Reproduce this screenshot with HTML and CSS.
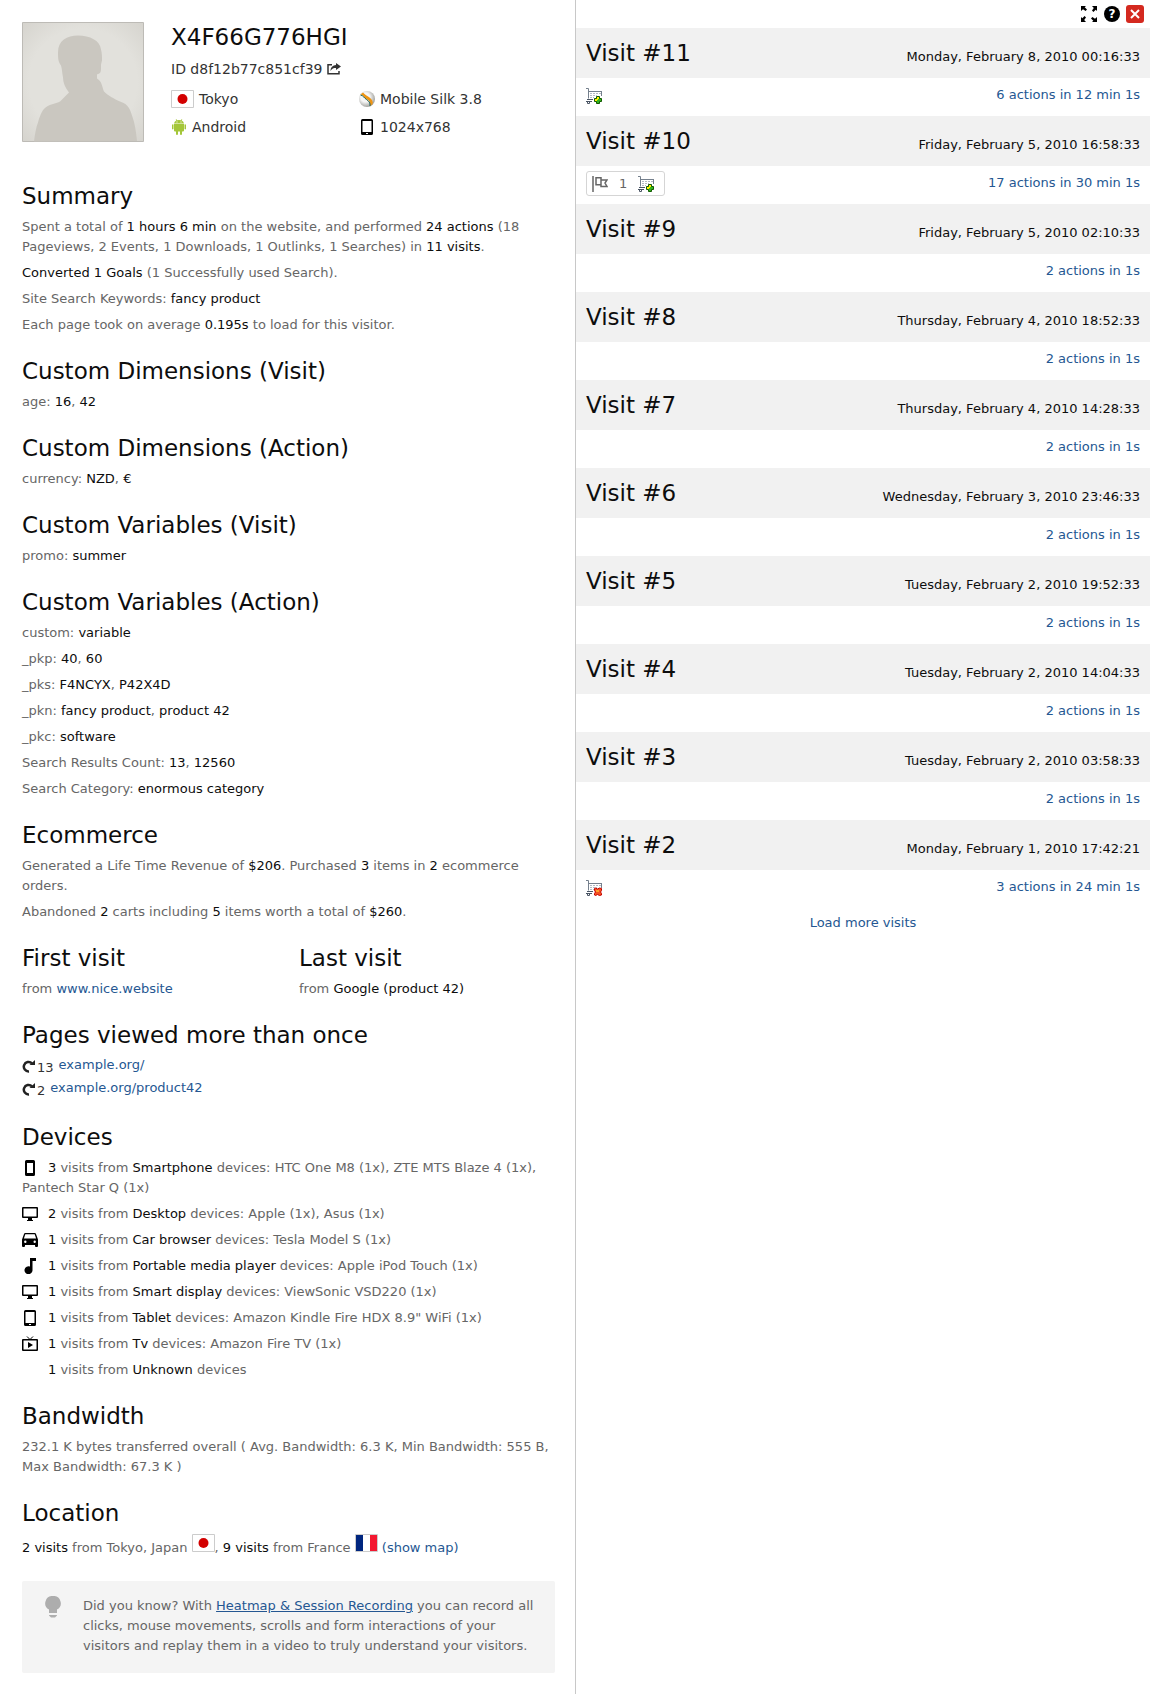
FILE: index.html
```html
<!DOCTYPE html>
<html lang="en">
<head>
<meta charset="utf-8">
<title>Visitor profile</title>
<link rel="stylesheet" href="styles.css">
</head>
<body>
<svg class="defs" aria-hidden="true">
  <symbol id="i-phone" viewBox="0 0 16 16"><path fill="#000" fill-rule="evenodd" d="M4.500 0h7A1.500 1.500 0 0 1 13 1.500v13a1.500 1.500 0 0 1-1.500 1.500h-7A1.500 1.500 0 0 1 3 14.500v-13A1.500 1.500 0 0 1 4.500 0zM5 3v10h6V3z"/></symbol>
  <symbol id="i-desktop" viewBox="0 0 16 16"><path fill="#000" fill-rule="evenodd" d="M1 1h14a1 1 0 0 1 1 1v9a1 1 0 0 1-1 1h-5v2h1v1H5v-1h1v-2H1a1 1 0 0 1-1-1V2a1 1 0 0 1 1-1zM1.500 2.500v8h13v-8z"/></symbol>
  <symbol id="i-car" viewBox="0 0 16 16"><path fill="#000" fill-rule="evenodd" d="M3.200 1h9.600q.9 0 1.200.9L16 7.500V14a1 1 0 0 1-1 1h-1a1 1 0 0 1-1-1v-1H3v1a1 1 0 0 1-1 1H1a1 1 0 0 1-1-1V7.500l2-5.600Q2.300 1 3.200 1zM3.300 2.300 1.900 6.500h12.200l-1.400-4.200zM3.300 8.500a1.200 1.200 0 1 0 0 2.400 1.200 1.200 0 0 0 0-2.400zm9.400 0a1.200 1.200 0 1 0 0 2.400 1.200 1.200 0 0 0 0-2.400z"/></symbol>
  <symbol id="i-music" viewBox="0 0 16 16"><path fill="#000" d="M8 0h6v3h-3.500v9A4 4 0 1 1 8 8.500z"/></symbol>
  <symbol id="i-tablet" viewBox="0 0 16 16"><path fill="#000" fill-rule="evenodd" d="M3.500 0h9A1.500 1.500 0 0 1 14 1.500v13a1.500 1.500 0 0 1-1.500 1.500h-9A1.500 1.500 0 0 1 2 14.500v-13A1.500 1.500 0 0 1 3.500 0zM3.500 2v11h9V2zM7 14v1h2v-1z"/></symbol>
  <symbol id="i-tv" viewBox="0 0 16 16"><path fill="#000" fill-rule="evenodd" d="M1 3h14a1 1 0 0 1 1 1v10a1 1 0 0 1-1 1H1a1 1 0 0 1-1-1V4a1 1 0 0 1 1-1zM1.500 4.500v9h13v-9zM6 6l5 3-5 3z"/><path fill="none" stroke="#000" d="M5 .5 8 3.500l3-3"/></symbol>
  <symbol id="i-japan" viewBox="0 0 23 18"><path fill="#fff" stroke="#ccc" d="M.5.5h22v17H.5z"/><circle cx="11.500" cy="9" r="5" fill="#d30000"/></symbol>
  <symbol id="i-cart" viewBox="0 0 16 16"><path fill="none" stroke="#75808d" d="M0 .5h2.500v10M3 3.500h13M15.500 4v4"/><path fill="none" stroke="#b4bac3" stroke-dasharray="2 1" d="M4 5.500h11M4 7.500h7M4 9.500h4"/><path fill="none" stroke="#4a5564" d="M1 11.500h6M0 13.500h6M1.500 14v1.500h2V14"/></symbol>
  <symbol id="i-cart-add" viewBox="0 0 16 16"><use href="#i-cart"/><path fill="#2fb51c" stroke="#125800" d="M10.500 8.500h3v2h2v3h-2v2h-3v-2h-2v-3h2z"/><path fill="#fff200" d="M11 9h2v2h-1v1h-1v1H9v-2h2z"/></symbol>
  <symbol id="i-cart-del" viewBox="0 0 16 16"><use href="#i-cart"/><path fill="#f4511e" stroke="#c40000" d="m8.500 8.500 1-.5 2 1 2-1 2 .5v2l-1 1.500 1 1.500v1.500l-2 .5-2-1-2 1-1-.5v-1.500l1-1.500-1-1.500z"/><path fill="#ff9c2a" d="M10 10h3v2h-3z"/></symbol>
  <symbol id="i-repeat" viewBox="0 0 14 16"><path fill="none" stroke="#222" stroke-width="2.500" d="M10 3.300A4.800 4.800 0 1 0 7 11.500"/><path fill="#222" d="M7.500 5H13V0z"/></symbol>
</svg>
<main class="profile">
  <section class="overview">
    <header class="visitor">
      <svg class="avatar" viewBox="0 0 122 120" role="img" aria-label="Visitor avatar">
        <defs><radialGradient id="paper" r=".75"><stop offset=".6" stop-color="#e2e1dc"/><stop offset="1" stop-color="#d3d1cb"/></radialGradient></defs>
        <path fill="url(#paper)" stroke="#bdbbb6" d="M.5.500h121v119H.5z"/>
        <path fill="#cac7c0" d="M12 119.500c1-8 2-14 4-19 2-8 5-14 9-16 5-3 9-3 13-5l9-9c-4-5-6-10-6-15-1-5-1-9-2-12-3-4-3-8-3-13 0-12 9-17 20-17 12 0 22 5 23 14 1 4 1 7 1 11l-1 4v4c0 4-1 5-4 6v4c5 3 5 8 7 13 5 5 10 7 16 10 9 3 10 8 12 14 3 8 4 16 5 25.500z"/>
      </svg>
      <div class="identity">
        <h1>X4F66G776HGI</h1>
        <p class="visitor-id">ID d8f12b77c851cf39
          <svg class="share" viewBox="0 0 14 12"><path fill="none" stroke="#333" stroke-width="1.500" d="M5 1.700H1v9h11V8"/><path fill="#333" d="M9 0l5 3.500L9 7V5C6.500 5 5 5.500 3.500 8 3.500 4.500 6 2.200 9 2z"/></svg></p>
        <div class="facts">
          <span class="fact"><svg class="flag"><use href="#i-japan"/></svg>Tokyo</span>
          <span class="fact"><svg class="icon" viewBox="0 0 16 16"><defs><radialGradient id="ball" cx=".4" cy=".4" r=".7"><stop offset=".4" stop-color="#f6f6f6"/><stop offset="1" stop-color="#8c8c86"/></radialGradient></defs><circle cx="8" cy="8" r="8" fill="url(#ball)"/><path fill="#ee9412" d="M1.500 3.500 4 1.500C6 4 8 4.500 10.500 6.500S14.500 11 13.500 13L11 15.300C12 11 10 9.500 7.500 8S4.500 4 1.500 3.500z"/><path fill="none" stroke="#155f55" d="M1.500 4c3 .5 3.500 3 6 4.500s4 3.500 3.500 6.500"/></svg>Mobile Silk 3.8</span>
          <span class="fact"><svg class="icon" viewBox="0 0 16 16"><path fill="#a4c639" d="M3 5h10v6.500a1 1 0 0 1-1 1h-1V15a1 1 0 0 1-2 0v-2.500H7V15a1 1 0 0 1-2 0v-2.500H4a1 1 0 0 1-1-1zM1 6a1 1 0 0 1 1.500-.5V10A1 1 0 0 1 1 10zm14 0a1 1 0 0 0-1.500-.5V10A1 1 0 0 0 15 10zM3 4.500Q3.300 2.300 5.300 1.500L4.700.3 5.200 0l.8 1.300q2-.6 4 0L10.800 0l.5.300-.6 1.200Q12.700 2.300 13 4.500z"/><path fill="#fff" d="M5.500 2.500h1v1h-1zm4 0h1v1h-1z"/></svg>Android</span>
          <span class="fact"><svg class="icon"><use href="#i-tablet"/></svg>1024x768</span>
        </div>
      </div>
    </header>

    <section class="block">
      <h2>Summary</h2>
      <p>Spent a total of <strong>1 hours 6 min</strong> on the website, and performed <strong>24 actions</strong> (18 Pageviews, 2 Events, 1 Downloads, 1 Outlinks, 1 Searches) in <strong>11 visits</strong>.</p>
      <p><strong>Converted 1 Goals</strong> (1 Successfully used Search).</p>
      <p>Site Search Keywords: <strong>fancy product</strong></p>
      <p>Each page took on average <strong>0.195s</strong> to load for this visitor.</p>
    </section>
    <section class="block">
      <h2>Custom Dimensions (Visit)</h2>
      <p>age: <strong>16</strong>, <strong>42</strong></p>
    </section>
    <section class="block">
      <h2>Custom Dimensions (Action)</h2>
      <p>currency: <strong>NZD</strong>, <strong>€</strong></p>
    </section>
    <section class="block">
      <h2>Custom Variables (Visit)</h2>
      <p>promo: <strong>summer</strong></p>
    </section>
    <section class="block">
      <h2>Custom Variables (Action)</h2>
      <p>custom: <strong>variable</strong></p>
      <p>_pkp: <strong>40</strong>, <strong>60</strong></p>
      <p>_pks: <strong>F4NCYX</strong>, <strong>P42X4D</strong></p>
      <p>_pkn: <strong>fancy product</strong>, <strong>product 42</strong></p>
      <p>_pkc: <strong>software</strong></p>
      <p>Search Results Count: <strong>13</strong>, <strong>12560</strong></p>
      <p>Search Category: <strong>enormous category</strong></p>
    </section>
    <section class="block">
      <h2>Ecommerce</h2>
      <p>Generated a Life Time Revenue of <strong>$206</strong>. Purchased <strong>3</strong> items in <strong>2</strong> ecommerce orders.</p>
      <p>Abandoned <strong>2</strong> carts including <strong>5</strong> items worth a total of <strong>$260</strong>.</p>
    </section>
    <div class="pair">
      <section class="block">
        <h2>First visit</h2>
        <p>from <a href="#">www.nice.website</a></p>
      </section>
      <section class="block">
        <h2>Last visit</h2>
        <p>from <strong>Google (product 42)</strong></p>
      </section>
    </div>
    <section class="block viewed">
      <h2>Pages viewed more than once</h2>
      <ul class="pages">
        <li><span class="count"><svg class="repeat"><use href="#i-repeat"/></svg>13</span><a href="#">example.org/</a></li>
        <li><span class="count"><svg class="repeat"><use href="#i-repeat"/></svg>2</span><a href="#">example.org/product42</a></li>
      </ul>
    </section>
    <section class="block devices">
      <h2>Devices</h2>
      <p><svg class="icon"><use href="#i-phone"/></svg><strong>3</strong> visits from <strong>Smartphone</strong> devices: HTC One M8 (1x), ZTE MTS Blaze 4 (1x), Pantech Star Q (1x)</p>
      <p><svg class="icon"><use href="#i-desktop"/></svg><strong>2</strong> visits from <strong>Desktop</strong> devices: Apple (1x), Asus (1x)</p>
      <p><svg class="icon"><use href="#i-car"/></svg><strong>1</strong> visits from <strong>Car browser</strong> devices: Tesla Model S (1x)</p>
      <p><svg class="icon"><use href="#i-music"/></svg><strong>1</strong> visits from <strong>Portable media player</strong> devices: Apple iPod Touch (1x)</p>
      <p><svg class="icon"><use href="#i-desktop"/></svg><strong>1</strong> visits from <strong>Smart display</strong> devices: ViewSonic VSD220 (1x)</p>
      <p><svg class="icon"><use href="#i-tablet"/></svg><strong>1</strong> visits from <strong>Tablet</strong> devices: Amazon Kindle Fire HDX 8.9" WiFi (1x)</p>
      <p><svg class="icon"><use href="#i-tv"/></svg><strong>1</strong> visits from <strong>Tv</strong> devices: Amazon Fire TV (1x)</p>
      <p><svg class="icon"></svg><strong>1</strong> visits from <strong>Unknown</strong> devices</p>
    </section>
    <section class="block">
      <h2>Bandwidth</h2>
      <p>232.1 K bytes transferred overall ( Avg. Bandwidth: 6.3 K, Min Bandwidth: 555 B, Max Bandwidth: 67.3 K )</p>
    </section>
    <section class="block location">
      <h2>Location</h2>
      <p><strong>2 visits</strong> from Tokyo, Japan <svg class="flag"><use href="#i-japan"/></svg>, <strong>9 visits</strong> from France <svg class="flag" viewBox="0 0 23 18"><path fill="#fff" stroke="#ccc" d="M.5.500h22v17H.5z"/><path fill="#00267f" d="M1 1h7v16H1z"/><path fill="#f31830" d="M15 1h7v16h-7z"/></svg> <a href="#">(show map)</a></p>
    </section>
    <aside class="tip">
      <svg class="bulb" viewBox="0 0 16 22"><path fill="#adadad" d="M8 0a7.200 7.200 0 0 1 4 13.500v3.500H4v-3.500A7.200 7.200 0 0 1 8 0zM4 19h8v.5L10 21.500H6l-2-2z"/></svg>
      <p>Did you know? With <a href="#">Heatmap &amp; Session Recording</a> you can record all clicks, mouse movements, scrolls and form interactions of your visitors and replay them in a video to truly understand your visitors.</p>
    </aside>
  </section>

  <section class="visits">
    <div class="toolbar">
      <button class="tool" aria-label="Expand"><svg viewBox="0 0 16 16"><path d="M0 0h5L3.700 1.300 6 3.600 4.600 5 2 3.200 0 5zM16 0v5l-1.300-1.300L12.400 6 11 4.600 12.800 2 11 0zM0 16v-5l1.300 1.300L3.600 10 5 11.400 3.200 14 5 16zM16 16h-5l1.300-1.300L10 12.400 11.400 11 14 12.800 16 11z"/></svg></button>
      <button class="tool help" aria-label="Help">?</button>
      <button class="tool close" aria-label="Close"><svg viewBox="0 0 18 18"><path fill="none" stroke="#fff" stroke-width="2" d="m5 5 8 8m0-8-8 8"/></svg></button>
    </div>
    <ol class="visit-list">
      <li><div class="visit-head"><h2>Visit #11</h2><time>Monday, February 8, 2010 00:16:33</time></div><div class="visit-info"><svg class="icon"><use href="#i-cart-add"/></svg><a href="#">6 actions in 12 min 1s</a></div></li>
      <li><div class="visit-head"><h2>Visit #10</h2><time>Friday, February 5, 2010 16:58:33</time></div><div class="visit-info"><span class="goals"><svg class="icon" viewBox="0 0 16 16"><path fill="none" stroke="#666" stroke-width="1.500" d="M1 0v16M4 1.800h5v7H4zM9 4h6l-2 3 2 3.500H9V8"/></svg><span>1</span><svg class="icon"><use href="#i-cart-add"/></svg></span><a href="#">17 actions in 30 min 1s</a></div></li>
      <li><div class="visit-head"><h2>Visit #9</h2><time>Friday, February 5, 2010 02:10:33</time></div><div class="visit-info"><a href="#">2 actions in 1s</a></div></li>
      <li><div class="visit-head"><h2>Visit #8</h2><time>Thursday, February 4, 2010 18:52:33</time></div><div class="visit-info"><a href="#">2 actions in 1s</a></div></li>
      <li><div class="visit-head"><h2>Visit #7</h2><time>Thursday, February 4, 2010 14:28:33</time></div><div class="visit-info"><a href="#">2 actions in 1s</a></div></li>
      <li><div class="visit-head"><h2>Visit #6</h2><time>Wednesday, February 3, 2010 23:46:33</time></div><div class="visit-info"><a href="#">2 actions in 1s</a></div></li>
      <li><div class="visit-head"><h2>Visit #5</h2><time>Tuesday, February 2, 2010 19:52:33</time></div><div class="visit-info"><a href="#">2 actions in 1s</a></div></li>
      <li><div class="visit-head"><h2>Visit #4</h2><time>Tuesday, February 2, 2010 14:04:33</time></div><div class="visit-info"><a href="#">2 actions in 1s</a></div></li>
      <li><div class="visit-head"><h2>Visit #3</h2><time>Tuesday, February 2, 2010 03:58:33</time></div><div class="visit-info"><a href="#">2 actions in 1s</a></div></li>
      <li><div class="visit-head"><h2>Visit #2</h2><time>Monday, February 1, 2010 17:42:21</time></div><div class="visit-info"><svg class="icon"><use href="#i-cart-del"/></svg><a href="#">3 actions in 24 min 1s</a></div></li>
    </ol>
    <a class="more" href="#">Load more visits</a>
  </section>
</main>
</body>
</html>
```
FILE: styles.css
```css
* { box-sizing: border-box; }
body {
  margin: 0;
  background: #fff;
  color: #666;
  font: 13px/20px "DejaVu Sans", Verdana, sans-serif;
}
h1, h2, p, ul, ol { margin: 0; padding: 0; font-weight: 400; }
ul, ol { list-style: none; }
h1, h2 { color: #0d0d0d; font-size: 23px; line-height: 28px; }
strong { color: #0d0d0d; font-weight: 400; }
a { color: #255792; text-decoration: none; }
svg { flex: none; }
.defs { position: absolute; width: 0; height: 0; }
.icon { width: 16px; height: 16px; }
.flag { width: 23px; height: 18px; }

.profile { display: grid; grid-template-columns: 1fr 1fr; min-height: 100vh; }
.overview { padding: 22px 20px 20px 22px; }
.visits { border-left: 1px solid #c8c8c8; }

.visitor { display: flex; gap: 27px; margin-bottom: 40px; color: #333; font-size: 14px; }
.avatar { width: 122px; height: 120px; }
.identity { flex: 1; }
.identity h1 { line-height: 30px; }
.visitor-id { margin: 5px 0 4px; line-height: 24px; }
.share { width: 14px; height: 12px; vertical-align: -1px; }
.facts { display: grid; grid-template-columns: 188px 1fr; }
.fact { display: flex; align-items: center; gap: 5px; line-height: 28px; }

.block { margin-bottom: 22px; }
.block h2 { margin-bottom: 7px; }
.viewed h2 { margin-bottom: 6px; }
.block p + p { margin-top: 6px; }
.pair { display: grid; grid-template-columns: 277px 1fr; }
.pages li { display: flex; gap: 5px; height: 23px; }
.count { display: flex; align-items: center; gap: 1px; padding-top: 2px; color: #333; }
.repeat { width: 14px; height: 16px; }
.devices .icon { margin-right: 10px; vertical-align: -4px; }
.location p { line-height: 26px; }

.tip { display: flex; gap: 22px; margin-top: 20px; padding: 15px 20px 17px 23px; border-radius: 2px; background: #f4f4f4; }
.location { margin-bottom: 20px; }
.tip a { text-decoration: underline; }
.bulb { width: 16px; height: 22px; }

.toolbar { display: flex; justify-content: flex-end; align-items: center; gap: 6px; height: 28px; padding: 0 6px; }
.tool { display: grid; place-items: center; width: 18px; height: 18px; padding: 0; border: 0; background: none; }
.tool svg { width: 16px; height: 16px; }
.help { width: 16px; height: 16px; border-radius: 50%; background: #000; color: #fff; font: bold 12px/16px "DejaVu Sans", sans-serif; }
.close { border-radius: 3px; background: #d4291f; }
.close svg { width: 18px; height: 18px; }
.visit-head { display: flex; justify-content: space-between; align-items: baseline; height: 50px; padding: 11px 10px 0; background: #f1f1f1; color: #0d0d0d; }
.visit-info { display: flex; align-items: center; height: 38px; padding: 0 10px 3px; }
.visit-info a { margin-left: auto; padding-bottom: 2px; }
.goals { display: flex; align-items: center; gap: 11px; height: 25px; padding: 0 10px 0 5px; border: 1px solid #d5d5d5; border-radius: 3px; }
.more { display: block; padding: 5px 0; text-align: center; }
```
